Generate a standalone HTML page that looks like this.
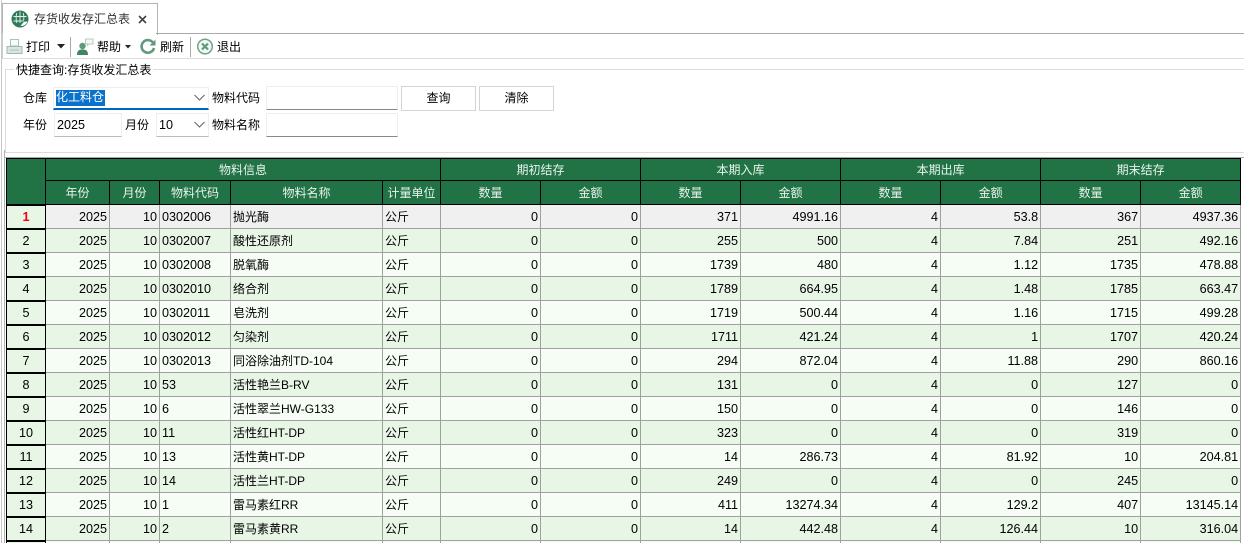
<!DOCTYPE html>
<html lang="zh"><head><meta charset="utf-8"><title>存货收发存汇总表</title>
<style>
html,body{margin:0;padding:0;width:1244px;height:543px;overflow:hidden;background:#fff}
body{position:relative;font-family:"Liberation Sans","Noto Sans CJK SC",sans-serif;font-size:12px;color:#000}
.a{position:absolute;white-space:nowrap}
.t{line-height:16px;height:16px}
table{position:absolute;left:6px;top:158px;border-spacing:0;table-layout:fixed;width:1235px;border-left:1px solid #000;box-sizing:border-box}
td,th{box-sizing:border-box;padding:0;overflow:hidden;white-space:nowrap;font-weight:normal}
th{background:#217346;color:#e8f3ec;border-right:1px solid #000;border-bottom:1px solid #000;text-align:center;font-size:12px}
thead tr:first-child th{border-top:1px solid #000}
thead tr:first-child{height:23px}
thead tr:last-child{height:24px}
td{height:24px;border-right:1px solid #a0a0a0;border-bottom:1px solid #a0a0a0;text-align:right;padding-right:2px;font-size:12.6px;color:#000}
tbody tr:nth-child(odd) td{background:#f5fdf5}
tbody tr:nth-child(even) td{background:#e8f6e6}
tbody tr:first-child td{background:#f0f0f0}
tbody td.h{background:#e8f6e6!important;text-align:center;padding:0;border-right:1px solid #000;border-top:1px solid #000;border-bottom:1px solid #000;font-size:12.6px}
tbody td.l{text-align:left;padding:0 0 0 2px}
tbody td.c{font-size:12px}
tbody td.red{color:#f0000f;font-weight:bold}
</style></head><body>
<!-- left edge -->
<div class="a" style="left:1px;top:0;width:1px;height:543px;background:#c8c8c8"></div>
<div class="a" style="left:4px;top:150px;width:1px;height:393px;background:#b0b0b0"></div>
<!-- tab -->
<div class="a" style="left:2px;top:3px;width:154px;height:31px;border:1px solid #b4b4b4;border-bottom:0;background:#fff"></div>
<div class="a" style="left:156px;top:33px;width:1088px;height:1px;background:#aaa"></div>
<div class="a" style="left:2px;top:33px;width:1px;height:26px;background:#ccc"></div>
<svg class="a" style="left:11px;top:10px" width="18" height="18" viewBox="0 0 18 18"><circle cx="9" cy="9" r="8.500" fill="#2f7a58"/><path d="M9 1.500V13M2.500 6.500H15.500M2.500 11H12.500M5.800 3C5 6 5 10 5.800 13M12.200 3C13 5.500 13 8 12.600 10.500" stroke="#e6f0eb" stroke-width="0.900" fill="none"/><path d="M9.500 16A6.500 6.500 0 0 0 16.500 11.500L13 11.800L11 14Z" fill="#fff"/></svg>
<div class="a t" style="left:34px;top:11px;color:#333">存货收发存汇总表</div>
<svg class="a" style="left:138px;top:15px" width="9" height="9" viewBox="0 0 9 9"><path d="M1 1L8 8M8 1L1 8" stroke="#444" stroke-width="1.600"/></svg>
<!-- toolbar -->
<svg class="a" style="left:6px;top:38px" width="17" height="17" viewBox="0 0 17 17"><path d="M4.500 1.500H12.500V8H4.500Z" fill="#f8fbf9" stroke="#a9c4b5"/><path d="M1 8.500H16V15.500H1Z" fill="#d9e6df" stroke="#9dbcab"/><path d="M4 12H13" stroke="#a9c4b5"/></svg>
<div class="a t" style="left:26px;top:39px">打印</div>
<svg class="a" style="left:57px;top:44px" width="8" height="5"><path d="M0 0H8L4 4.500Z" fill="#222"/></svg>
<div class="a" style="left:70px;top:37px;width:1px;height:20px;background:#aaa"></div>
<svg class="a" style="left:76px;top:38px" width="18" height="17" viewBox="0 0 18 17"><circle cx="6.500" cy="8" r="3.200" fill="#5f9a7c"/><path d="M1 17C1 12.500 3 11.500 6.500 11.500S12 12.500 12 17Z" fill="#3f8464"/><path d="M9.500 1H17V6H13L11.500 7.500V6H9.500Z" fill="#f4f8f5" stroke="#b5cdc0"/></svg>
<div class="a t" style="left:97px;top:39px">帮助</div>
<svg class="a" style="left:125px;top:45px" width="6" height="4"><path d="M0 0H6L3 3.500Z" fill="#222"/></svg>
<svg class="a" style="left:139px;top:38px" width="18" height="17" viewBox="0 0 18 17"><path d="M14.200 5A6.300 6.300 0 1 0 15 10" fill="none" stroke="#5f9a7c" stroke-width="2.600"/><path d="M16.500 1.500V7.500H10.500Z" fill="#5f9a7c"/></svg>
<div class="a t" style="left:160px;top:39px">刷新</div>
<div class="a" style="left:190px;top:37px;width:1px;height:20px;background:#aaa"></div>
<svg class="a" style="left:196px;top:38px" width="18" height="17" viewBox="0 0 18 17"><circle cx="9" cy="8.500" r="7.300" fill="#f3f8f5" stroke="#6ea58a" stroke-width="1.500"/><path d="M6 5.500L12 11.500M12 5.500L6 11.500" stroke="#5f9a7c" stroke-width="2.200"/></svg>
<div class="a t" style="left:217px;top:39px">退出</div>
<div class="a" style="left:2px;top:58px;width:1242px;height:1px;background:#dcdcdc"></div>
<!-- group box -->
<div class="a" style="left:5px;top:69px;width:1239px;height:1px;background:#dcdcdc"></div>
<div class="a" style="left:5px;top:69px;width:1px;height:84px;background:#dcdcdc"></div>
<div class="a" style="left:5px;top:152px;width:1239px;height:1px;background:#dcdcdc"></div>
<div class="a t" style="left:14px;top:62px;background:#fff;padding:0 2px">快捷查询:存货收发汇总表</div>
<div class="a t" style="left:23px;top:90px">仓库</div>
<div class="a" style="left:53px;top:87px;width:156px;height:23px;box-sizing:border-box;background:#fff;border:1px solid #efefef;border-bottom:2px solid #0067c0"></div>
<div class="a" style="left:56px;top:90px;width:49px;height:16px;background:#0a72cc;color:#fff;line-height:15px">化工料仓</div>
<svg class="a" style="left:194px;top:94px" width="11" height="7"><path d="M0.500 1L5.500 6L10.500 1" fill="none" stroke="#666" stroke-width="1.100"/></svg>
<div class="a t" style="left:212px;top:90px">物料代码</div>
<div class="a" style="left:266px;top:86px;width:132px;height:24px;box-sizing:border-box;background:#fff;border:1px solid #eee;border-bottom:1px solid #888"></div>
<div class="a" style="left:401px;top:86px;width:75px;height:25px;box-sizing:border-box;background:#fff;border:1px solid #d4d4d4;text-align:center;line-height:23px">查询</div>
<div class="a" style="left:479px;top:86px;width:75px;height:25px;box-sizing:border-box;background:#fff;border:1px solid #d4d4d4;text-align:center;line-height:23px">清除</div>
<div class="a t" style="left:23px;top:117px">年份</div>
<div class="a" style="left:54px;top:113px;width:68px;height:24px;box-sizing:border-box;background:#fff;border:1px solid #eee;border-bottom:1px solid #bbb;padding-left:2px;font-size:12.600px;line-height:22px">2025</div>
<div class="a t" style="left:125px;top:117px">月份</div>
<div class="a" style="left:156px;top:113px;width:53px;height:24px;box-sizing:border-box;background:#fff;border:1px solid #eee;border-bottom:1px solid #bbb;padding-left:2px;font-size:12.600px;line-height:22px">10</div>
<svg class="a" style="left:194px;top:121px" width="11" height="7"><path d="M0.500 1L5.500 6L10.500 1" fill="none" stroke="#666" stroke-width="1.100"/></svg>
<div class="a t" style="left:212px;top:117px">物料名称</div>
<div class="a" style="left:266px;top:113px;width:132px;height:24px;box-sizing:border-box;background:#fff;border:1px solid #eee;border-bottom:1px solid #888"></div>
<!-- grid -->
<div class="a" style="left:5px;top:157px;width:1239px;height:1px;background:#a8a8a8"></div>
<table>
<colgroup><col style="width:39px"><col style="width:64px"><col style="width:50px"><col style="width:71px"><col style="width:152px"><col style="width:58px"><col style="width:100px"><col style="width:100px"><col style="width:100px"><col style="width:100px"><col style="width:100px"><col style="width:100px"><col style="width:100px"><col style="width:100px"></colgroup>
<thead>
<tr><th rowspan="2"></th><th colspan="5">物料信息</th><th colspan="2">期初结存</th><th colspan="2">本期入库</th><th colspan="2">本期出库</th><th colspan="2">期末结存</th></tr>
<tr><th>年份</th><th>月份</th><th>物料代码</th><th>物料名称</th><th>计量单位</th><th>数量</th><th>金额</th><th>数量</th><th>金额</th><th>数量</th><th>金额</th><th>数量</th><th>金额</th></tr>
</thead>
<tbody>
<tr><td class="h red">1</td><td>2025</td><td>10</td><td class="l">0302006</td><td class="l c">抛光酶</td><td class="l c">公斤</td><td>0</td><td>0</td><td>371</td><td>4991.16</td><td>4</td><td>53.8</td><td>367</td><td>4937.36</td></tr>
<tr><td class="h">2</td><td>2025</td><td>10</td><td class="l">0302007</td><td class="l c">酸性还原剂</td><td class="l c">公斤</td><td>0</td><td>0</td><td>255</td><td>500</td><td>4</td><td>7.84</td><td>251</td><td>492.16</td></tr>
<tr><td class="h">3</td><td>2025</td><td>10</td><td class="l">0302008</td><td class="l c">脱氧酶</td><td class="l c">公斤</td><td>0</td><td>0</td><td>1739</td><td>480</td><td>4</td><td>1.12</td><td>1735</td><td>478.88</td></tr>
<tr><td class="h">4</td><td>2025</td><td>10</td><td class="l">0302010</td><td class="l c">络合剂</td><td class="l c">公斤</td><td>0</td><td>0</td><td>1789</td><td>664.95</td><td>4</td><td>1.48</td><td>1785</td><td>663.47</td></tr>
<tr><td class="h">5</td><td>2025</td><td>10</td><td class="l">0302011</td><td class="l c">皂洗剂</td><td class="l c">公斤</td><td>0</td><td>0</td><td>1719</td><td>500.44</td><td>4</td><td>1.16</td><td>1715</td><td>499.28</td></tr>
<tr><td class="h">6</td><td>2025</td><td>10</td><td class="l">0302012</td><td class="l c">匀染剂</td><td class="l c">公斤</td><td>0</td><td>0</td><td>1711</td><td>421.24</td><td>4</td><td>1</td><td>1707</td><td>420.24</td></tr>
<tr><td class="h">7</td><td>2025</td><td>10</td><td class="l">0302013</td><td class="l c">同浴除油剂TD-104</td><td class="l c">公斤</td><td>0</td><td>0</td><td>294</td><td>872.04</td><td>4</td><td>11.88</td><td>290</td><td>860.16</td></tr>
<tr><td class="h">8</td><td>2025</td><td>10</td><td class="l">53</td><td class="l c">活性艳兰B-RV</td><td class="l c">公斤</td><td>0</td><td>0</td><td>131</td><td>0</td><td>4</td><td>0</td><td>127</td><td>0</td></tr>
<tr><td class="h">9</td><td>2025</td><td>10</td><td class="l">6</td><td class="l c">活性翠兰HW-G133</td><td class="l c">公斤</td><td>0</td><td>0</td><td>150</td><td>0</td><td>4</td><td>0</td><td>146</td><td>0</td></tr>
<tr><td class="h">10</td><td>2025</td><td>10</td><td class="l">11</td><td class="l c">活性红HT-DP</td><td class="l c">公斤</td><td>0</td><td>0</td><td>323</td><td>0</td><td>4</td><td>0</td><td>319</td><td>0</td></tr>
<tr><td class="h">11</td><td>2025</td><td>10</td><td class="l">13</td><td class="l c">活性黄HT-DP</td><td class="l c">公斤</td><td>0</td><td>0</td><td>14</td><td>286.73</td><td>4</td><td>81.92</td><td>10</td><td>204.81</td></tr>
<tr><td class="h">12</td><td>2025</td><td>10</td><td class="l">14</td><td class="l c">活性兰HT-DP</td><td class="l c">公斤</td><td>0</td><td>0</td><td>249</td><td>0</td><td>4</td><td>0</td><td>245</td><td>0</td></tr>
<tr><td class="h">13</td><td>2025</td><td>10</td><td class="l">1</td><td class="l c">雷马素红RR</td><td class="l c">公斤</td><td>0</td><td>0</td><td>411</td><td>13274.34</td><td>4</td><td>129.2</td><td>407</td><td>13145.14</td></tr>
<tr><td class="h">14</td><td>2025</td><td>10</td><td class="l">2</td><td class="l c">雷马素黄RR</td><td class="l c">公斤</td><td>0</td><td>0</td><td>14</td><td>442.48</td><td>4</td><td>126.44</td><td>10</td><td>316.04</td></tr>
<tr><td class="h"></td><td></td><td></td><td class="l"></td><td class="l c"></td><td class="l c"></td><td></td><td></td><td></td><td></td><td></td><td></td><td></td><td></td></tr>
</tbody>
</table>
</body></html>
